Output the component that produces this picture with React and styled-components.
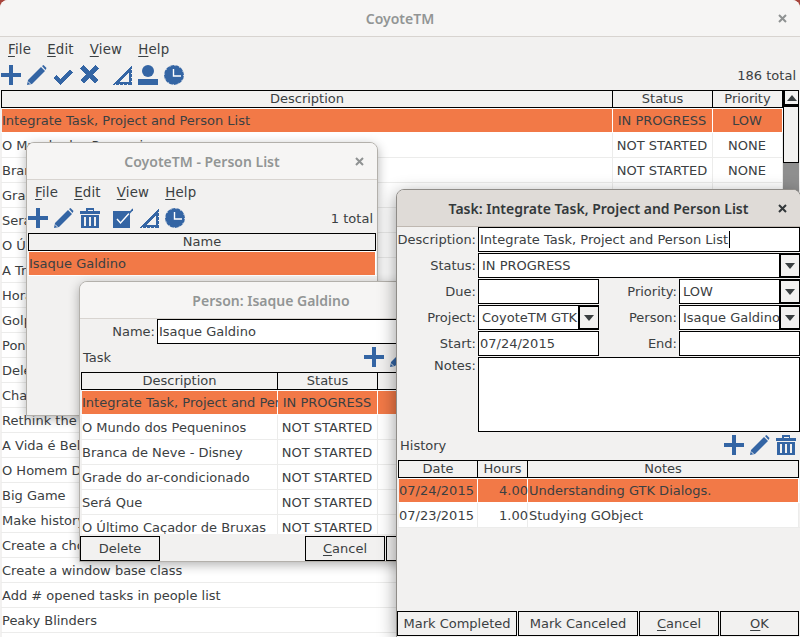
import React from "react";
import styled, { createGlobalStyle } from "styled-components";

const BG = "#f2f1f0";
const TEXT = "#3b4042";
const BLUE = "#3465a4";
const SELECTED = "#f27947";

const GlobalStyle = createGlobalStyle`
  html, body {
    margin: 0;
    width: 800px;
    height: 637px;
    overflow: hidden;
    background: #a8453c;
  }
  body, button {
    font-family: "DejaVu Sans", "Liberation Sans", sans-serif;
    font-size: 13px;
    color: ${TEXT};
  }
  * { box-sizing: border-box; }
`;

const Desktop = styled.div`
  position: relative;
  width: 800px;
  height: 637px;
  overflow: hidden;
`;

const MainWindow = styled.div`
  display: flex;
  flex-direction: column;
  height: 637px;
  background: ${BG};
  border-radius: 8px 8px 0 0;
  overflow: hidden;
`;

const FloatingWindow = styled.section`
  position: absolute;
  left: ${(p) => p.$left}px;
  top: ${(p) => p.$top}px;
  width: ${(p) => p.$width}px;
  height: ${(p) => p.$height}px;
  display: flex;
  flex-direction: column;
  background: ${BG};
  border: 1px solid ${(p) => (p.$focused ? "#8f8c88" : "#b3b0ab")};
  border-radius: 8px 8px 0 0;
  box-shadow: 0 ${(p) => (p.$focused ? "5px 18px rgba(0,0,0,.42)" : "3px 11px rgba(0,0,0,.3)")};
  overflow: hidden;
`;

const TitleBar = styled.header`
  flex: none;
  height: 37px;
  display: grid;
  grid-template-columns: 36px 1fr 36px;
  align-items: center;
  background: ${(p) => (p.$focused ? "#dfdbd7" : "#f6f5f4")};
  border-bottom: 1px solid ${(p) => (p.$focused ? "#bfb8b1" : "#d8d4d0")};
`;

const Title = styled.div`
  grid-column: 2;
  text-align: center;
  font-family: "Noto Sans", sans-serif;
  font-size: 14px;
  font-weight: 600;
  white-space: nowrap;
  color: ${(p) => (p.$focused ? "#33383a" : "#929595")};
`;

const CloseGlyph = styled.svg`
  justify-self: center;
  width: 9px;
  height: 9px;
  stroke: ${(p) => (p.$focused ? "#33383a" : "#8f9292")};
  stroke-width: 2;
  fill: none;
`;

const MenuBar = styled.nav`
  flex: none;
  height: 25px;
  display: flex;
  align-items: center;
`;

const MenuItem = styled.span`
  padding: 0 8px;
  font-size: 13.33px;
  letter-spacing: 0.2px;
`;

const Mnemonic = styled.span`
  text-decoration: underline;
  text-underline-offset: 2px;
`;

const ToolBar = styled.div`
  flex: none;
  height: 28px;
  display: flex;
  align-items: flex-start;
  padding: 3px 4px 0 ${(p) => p.$indent ?? 1}px;
`;

const IconGroup = styled.div`
  display: flex;
  gap: 6px;
  margin-left: ${(p) => p.$offset ?? 0}px;
  padding-right: ${(p) => p.$pad ?? 0}px;
`;

const Total = styled.span`
  margin-left: auto;
  line-height: 22px;
`;

const ToolLabel = styled.span`
  margin-right: auto;
  line-height: 22px;
`;

const IconSvg = styled.svg`
  display: block;
  width: 20px;
  height: 20px;
  fill: ${BLUE};
  flex: none;
`;

const Plus = () => (
  <IconSvg viewBox="0 0 20 20" shapeRendering="crispEdges">
    <rect x="0" y="8" width="20" height="4" />
    <rect x="8" y="0" width="4" height="20" />
  </IconSvg>
);

const Pencil = () => (
  <IconSvg viewBox="0 0 20 20">
    <path d="M0 20 L1 15 L14 2 L18 6 L5 19 Z" />
    <path d="M15 1 L16.5 0 L19.5 3 L18.5 5 Z" />
    <path d="M1 16.5 L3.5 19" stroke={BG} strokeWidth="1" fill="none" />
  </IconSvg>
);

const Check = () => (
  <IconSvg viewBox="0 0 20 20" shapeRendering="crispEdges">
    <path d="M0 13 L3 10 L7.5 14 L17 5 L20 8 L7.5 20 Z" />
  </IconSvg>
);

const Cross = () => (
  <IconSvg viewBox="0 0 20 20" shapeRendering="crispEdges">
    <path d="M3 2 L18 17 M18 2 L3 17" stroke={BLUE} strokeWidth="4.6" fill="none" />
  </IconSvg>
);

const SetSquare = () => (
  <IconSvg viewBox="0 0 20 20" shapeRendering="crispEdges">
    <path fillRule="evenodd" d="M0 20 L20 0 L20 20 Z M8 16.5 L16.5 16.5 L16.5 8 Z" />
    <path d="M3 19.5 h1 M7 19.5 h1 M11 19.5 h1 M15 19.5 h1 M19.5 4 v1 M19.5 8 v1 M19.5 12 v1 M19.5 16 v1" stroke={BG} strokeWidth="1" fill="none" />
  </IconSvg>
);

const Person = () => (
  <IconSvg viewBox="0 0 20 20">
    <circle cx="10" cy="6" r="6" />
    <rect x="0" y="14" width="20" height="6" />
  </IconSvg>
);

const Clock = () => (
  <IconSvg viewBox="0 0 20 20">
    <circle cx="10" cy="10" r="10" />
    <circle cx="10" cy="10" r="9.5" fill="none" stroke={BG} strokeWidth="1" strokeDasharray="1 4" />
    <path d="M9.5 4 V11 H17" stroke="#fff" strokeWidth="1.4" fill="none" />
  </IconSvg>
);

const Trash = () => (
  <IconSvg viewBox="0 0 20 20" shapeRendering="crispEdges">
    <path fillRule="evenodd" d="M6 0 H14 V3 H20 V6 H0 V3 H6 Z M7.5 1.5 V3 H12.5 V1.5 Z" />
    <path fillRule="evenodd" d="M1 7 H19 V20 H1 Z M4 9 V18 H6 V9 Z M9 9 V18 H11 V9 Z M14 9 V18 H16 V9 Z" />
  </IconSvg>
);

const Checkbox = () => (
  <IconSvg viewBox="0 0 20 20">
    <rect x="0" y="3" width="17" height="17" />
    <path d="M4 11 L7.5 15 L16 5.5" stroke="#fff" strokeWidth="1.4" fill="none" />
    <path d="M16 5.5 L20 1" stroke={BLUE} strokeWidth="1.6" fill="none" />
  </IconSvg>
);

const ListArea = styled.div`
  flex: 1;
  min-height: 0;
  display: flex;
  align-items: stretch;
`;

const Table = styled.div`
  padding-left: 1px;
  flex: none;
  height: ${(p) => (p.$clip ? `${p.$clip}px` : "auto")};
  overflow: hidden;
`;

const HeaderRow = styled.div`
  display: grid;
  grid-template-columns: ${(p) => p.$cols};
  height: 18px;
`;

const HeaderCell = styled.div`
  border: 1px solid #000;
  border-left-width: ${(p) => (p.$first ? 1 : 0)}px;
  text-align: center;
  line-height: 16px;
  white-space: nowrap;
  overflow: hidden;
`;

const Row = styled.div`
  display: grid;
  grid-template-columns: ${(p) => p.$cols};
  height: 25px;
  background: ${(p) => (p.$selected ? SELECTED : "#fff")};
  border-bottom: 1px solid ${(p) => (p.$selected ? "#fff" : "#ececeb")};
  box-shadow: inset 1px 0 ${BG}, inset -1px 0 ${BG}
    ${(p) => (p.$selected ? ", inset 0 1px #fff" : "")};
`;

const Cell = styled.div`
  line-height: 25px;
  white-space: nowrap;
  overflow: hidden;
  text-align: ${(p) => p.$align ?? "left"};
  padding: 0 ${(p) => (p.$align === "right" ? 0 : p.$align ? 2 : 3)}px 0 ${(p) => (p.$align ? 0 : 1)}px;
  box-shadow: inset -1px 0 ${(p) => (p.$selected ? "#fff" : "#ececeb")};
`;

const Scrollbar = styled.div`
  flex: none;
  width: 16px;
  display: flex;
  flex-direction: column;
  background: #8f8f8f;
`;

const ScrollButton = styled.div`
  height: 16px;
  display: flex;
  align-items: center;
  justify-content: center;
  background: ${BG};
  border: 1px solid #000;
  border-width: 1px 1px 2px 2px;
`;

const ScrollThumb = styled.div`
  height: 57px;
  background: ${BG};
  border: 1px solid #000;
`;

const Triangle = styled.span`
  width: 0;
  height: 0;
  border-left: 5.5px solid transparent;
  border-right: 5.5px solid transparent;
  ${(p) => (p.$up ? "border-bottom" : "border-top")}: 6px solid #3a3f41;
`;

const Buttons = styled.div`
  flex: none;
  display: flex;
  gap: 1px;
  height: 25px;
  margin-top: auto;
  margin-bottom: ${(p) => p.$bottom ?? 0}px;
`;

const Button = styled.button`
  flex: none;
  width: ${(p) => p.$width}px;
  margin-left: ${(p) => p.$offset ?? 0}px;
  padding: 0;
  background: ${BG};
  border: 1px solid #000;
`;

const NameRow = styled.div`
  flex: none;
  display: grid;
  grid-template-columns: 75px 1fr;
  column-gap: 2px;
  height: 25px;
`;

const Label = styled.label`
  justify-self: end;
  align-self: ${(p) => (p.$top ? "start" : "center")};
  padding-top: ${(p) => (p.$top ? 1 : 0)}px;
  white-space: nowrap;
`;

const Field = styled.div`
  grid-column: ${(p) => (p.$wide ? "2 / span 3" : "auto")};
  display: flex;
  align-items: center;
  height: ${(p) => p.$height ?? 25}px;
  padding-left: ${(p) => p.$pad ?? 1}px;
  background: #fff;
  border: 1px solid #000;
  white-space: nowrap;
  overflow: hidden;
`;

const Caret = styled.span`
  flex: none;
  width: 1px;
  height: 17px;
  margin-left: 1px;
  background: #000;
`;

const ComboText = styled.span`
  flex: 1;
  min-width: 0;
  overflow: hidden;
`;

const ComboArrow = styled.span`
  flex: none;
  width: 20px;
  height: 100%;
  display: flex;
  align-items: center;
  justify-content: center;
  background: ${BG};
  border: 0 solid #000;
  border-width: 1px 0 1px 2px;
`;

const FormGrid = styled.div`
  flex: none;
  display: grid;
  grid-template-columns: 79px 121px 76px 121px;
  gap: 1px 2px;
`;

const Closer = ({ focused }) => (
  <CloseGlyph viewBox="0 0 9 9" $focused={focused}>
    <path d="M1 1 L8 8 M8 1 L1 8" />
  </CloseGlyph>
);

const Combo = ({ value }) => (
  <Field $pad={3}>
    <ComboText>{value}</ComboText>
    <ComboArrow>
      <Triangle />
    </ComboArrow>
  </Field>
);

const Menus = () => (
  <MenuBar>
    {["File", "Edit", "View", "Help"].map((m) => (
      <MenuItem key={m}>
        <Mnemonic>{m[0]}</Mnemonic>
        {m.slice(1)}
      </MenuItem>
    ))}
  </MenuBar>
);

const MAIN_COLS = "612px 100px 70px";
const PERSON_COLS = "197px 100px 84px";
const HISTORY_COLS = "80px 50px 271px";

const tasks = [
  "Integrate Task, Project and Person List",
  "O Mundo dos Pequeninos",
  "Branca de Neve - Disney",
  "Grade do ar-condicionado",
  "Será Que",
  "O Último Caçador de Bruxas",
  "A Travessia",
  "Hora de Voltar",
  "Golpe Duplo",
  "Ponte dos Espiões",
  "Delete task button",
  "Change project list",
  "Rethink the task list",
  "A Vida é Bela",
  "O Homem Duplicado",
  "Big Game",
  "Make history view",
  "Create a chooser dialog",
  "Create a window base class",
  "Add # opened tasks in people list",
  "Peaky Blinders",
];

const TaskRows = ({ cols, items }) =>
  items.map((name, i) => (
    <Row key={name} $cols={cols} $selected={i === 0}>
      <Cell $selected={i === 0}>{name}</Cell>
      <Cell $selected={i === 0} $align="center">
        {i === 0 ? "IN PROGRESS" : "NOT STARTED"}
      </Cell>
      <Cell $selected={i === 0} $align="center">
        {i === 0 ? "LOW" : "NONE"}
      </Cell>
    </Row>
  ));

const TableHead = ({ cols, names }) => (
  <HeaderRow $cols={cols}>
    {names.map((n, i) => (
      <HeaderCell key={n} $first={i === 0}>
        {n}
      </HeaderCell>
    ))}
  </HeaderRow>
);

export default function App() {
  return (
    <Desktop>
      <GlobalStyle />

      <MainWindow>
        <TitleBar>
          <Title>CoyoteTM</Title>
          <Closer />
        </TitleBar>
        <Menus />
        <ToolBar>
          <IconGroup>
            <Plus />
            <Pencil />
            <Check />
            <Cross />
          </IconGroup>
          <IconGroup $offset={13}>
            <SetSquare />
            <Person />
            <Clock />
          </IconGroup>
          <Total>186 total</Total>
        </ToolBar>
        <ListArea>
          <Table>
            <TableHead cols={MAIN_COLS} names={["Description", "Status", "Priority"]} />
            <TaskRows cols={MAIN_COLS} items={tasks} />
            <Row $cols={MAIN_COLS} />
          </Table>
          <Scrollbar>
            <ScrollButton>
              <Triangle $up />
            </ScrollButton>
            <ScrollThumb />
          </Scrollbar>
        </ListArea>
      </MainWindow>

      <FloatingWindow $left={26} $top={142} $width={352} $height={274}>
        <TitleBar>
          <Title>CoyoteTM - Person List</Title>
          <Closer />
        </TitleBar>
        <Menus />
        <ToolBar>
          <IconGroup>
            <Plus />
            <Pencil />
            <Trash />
          </IconGroup>
          <IconGroup $offset={13}>
            <Checkbox />
            <SetSquare />
            <Clock />
          </IconGroup>
          <Total>1 total</Total>
        </ToolBar>
        <Table>
          <TableHead cols="348px" names={["Name"]} />
          <Row $cols="348px" $selected>
            <Cell $selected>Isaque Galdino</Cell>
          </Row>
        </Table>
      </FloatingWindow>

      <FloatingWindow $left={79} $top={281} $width={384} $height={281}>
        <TitleBar>
          <Title>Person: Isaque Galdino</Title>
          <Closer />
        </TitleBar>
        <NameRow>
          <Label>Name:</Label>
          <Field>Isaque Galdino</Field>
        </NameRow>
        <ToolBar $indent={3}>
          <ToolLabel>Task</ToolLabel>
          <IconGroup $pad={22}>
            <Plus />
            <Pencil />
            <Trash />
          </IconGroup>
        </ToolBar>
        <Table $clip={162}>
          <TableHead cols={PERSON_COLS} names={["Description", "Status", "Priority"]} />
          <TaskRows cols={PERSON_COLS} items={tasks.slice(0, 6)} />
        </Table>
        <Buttons>
          <Button $width={80}>Delete</Button>
          <Button $width={80} $offset={144}>
            <Mnemonic>C</Mnemonic>ancel
          </Button>
          <Button $width={76}>
            <Mnemonic>O</Mnemonic>K
          </Button>
        </Buttons>
      </FloatingWindow>

      <FloatingWindow $focused $left={396} $top={189} $width={405} $height={449}>
        <TitleBar $focused>
          <Title $focused>Task: Integrate Task, Project and Person List</Title>
          <Closer focused />
        </TitleBar>
        <FormGrid>
          <Label>Description:</Label>
          <Field $wide>
            Integrate Task, Project and Person List
            <Caret />
          </Field>
          <Label>Status:</Label>
          <Field $wide $pad={3}>
            <ComboText>IN PROGRESS</ComboText>
            <ComboArrow>
              <Triangle />
            </ComboArrow>
          </Field>
          <Label>Due:</Label>
          <Field />
          <Label>Priority:</Label>
          <Combo value="LOW" />
          <Label>Project:</Label>
          <Combo value="CoyoteTM GTK" />
          <Label>Person:</Label>
          <Combo value="Isaque Galdino" />
          <Label>Start:</Label>
          <Field>07/24/2015</Field>
          <Label>End:</Label>
          <Field />
          <Label $top>Notes:</Label>
          <Field $wide $height={75} />
        </FormGrid>
        <ToolBar $indent={3}>
          <ToolLabel>History</ToolLabel>
          <IconGroup $pad={-1}>
            <Plus />
            <Pencil />
            <Trash />
          </IconGroup>
        </ToolBar>
        <Table>
          <TableHead cols={HISTORY_COLS} names={["Date", "Hours", "Notes"]} />
          <Row $cols={HISTORY_COLS} $selected>
            <Cell $selected>07/24/2015</Cell>
            <Cell $selected $align="right">4.00</Cell>
            <Cell $selected>Understanding GTK Dialogs.</Cell>
          </Row>
          <Row $cols={HISTORY_COLS}>
            <Cell>07/23/2015</Cell>
            <Cell $align="right">1.00</Cell>
            <Cell>Studying GObject</Cell>
          </Row>
        </Table>
        <Buttons $bottom={1}>
          <Button $width={120}>Mark Completed</Button>
          <Button $width={120}>Mark Canceled</Button>
          <Button $width={80}>
            <Mnemonic>C</Mnemonic>ancel
          </Button>
          <Button $width={79}>
            <Mnemonic>O</Mnemonic>K
          </Button>
        </Buttons>
      </FloatingWindow>
    </Desktop>
  );
}
